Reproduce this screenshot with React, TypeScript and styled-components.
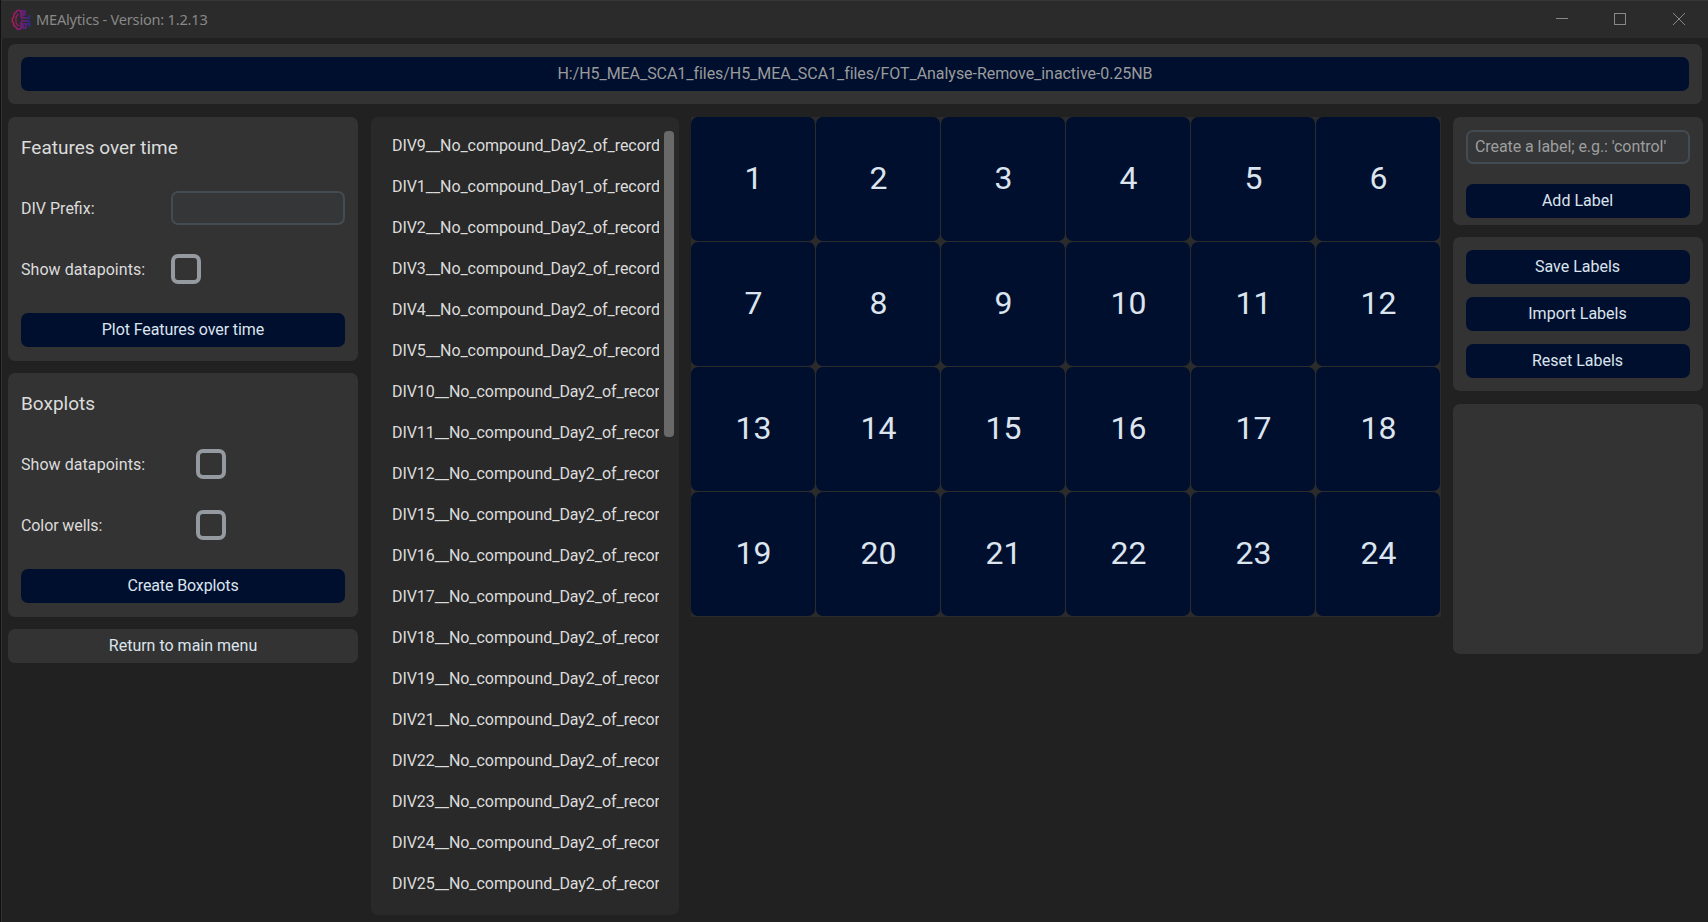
import React from "react";
import styled, { createGlobalStyle } from "styled-components";

const Global = createGlobalStyle`
  * { box-sizing: border-box; }
  body { margin: 0; background: #212121; font-family: Roboto, "Liberation Sans", sans-serif; }
  button, input { font: inherit; }
`;

const Window = styled.div`
  width: 1708px;
  height: 922px;
  overflow: hidden;
  background: #212121;
  border-left: 1px solid #111;
  box-shadow: inset 1px 0 0 #323232;
  color: #dce4ee;
  font-size: 16px;
`;

const TitleBar = styled.header`
  height: 38px;
  display: flex;
  align-items: center;
  background: #2b2b2b;
  border-top: 1px solid #363636;
  padding-left: 10px;
`;

const Title = styled.span`
  flex: 1;
  margin-left: 5px;
  font: 14.6px "Noto Sans", sans-serif;
  letter-spacing: -0.22px;
  color: #888;
  padding-bottom: 1px;
`;

const WindowControls = styled.div`
  display: flex;
  padding-right: 8px;
  svg { display: block; width: 58px; height: 37px; }
`;

const Body = styled.main`
  padding: 6px 5px 7px 7px;
`;

const PathCard = styled.div`
  width: 1694px;
  height: 60px;
  padding: 13px;
  border-radius: 7px;
  background: #333;
`;

const Button = styled.button<{ $tone?: "navy" | "gray"; $dim?: boolean; $track?: number }>`
  display: flex;
  align-items: center;
  justify-content: center;
  flex: none;
  width: 100%;
  height: 34px;
  padding: 0 0 1px;
  border: 0;
  border-radius: 7px;
  background: ${(p) => (p.$tone === "gray" ? "#333" : "#000f2e")};
  color: ${(p) => (p.$dim ? "#9a9b9c" : "#dce4ee")};
  letter-spacing: ${(p) => p.$track ?? 0}px;
`;

const Columns = styled.div`
  display: flex;
  align-items: flex-start;
  gap: 12px;
  margin-top: 13px;
`;

const LeftColumn = styled.div`
  width: 350px;
  margin-right: 1px;
  display: flex;
  flex-direction: column;
  gap: 12px;
`;

const RightColumn = styled.div`
  width: 250px;
  display: flex;
  flex-direction: column;
  ${Button} { padding-right: 1px; }
`;

const Card = styled.section<{ $height: number; $gap?: number; $after?: number }>`
  display: flex;
  flex-direction: column;
  gap: ${(p) => p.$gap ?? 0}px;
  height: ${(p) => p.$height}px;
  margin-bottom: ${(p) => p.$after ?? 0}px;
  padding: 13px;
  border-radius: 7px;
  background: #333;
`;

const Heading = styled.h2`
  flex: none;
  height: 34px;
  margin: 0;
  padding-top: 1px;
  font-size: 19px;
  font-weight: 400;
  line-height: 34px;
  color: #dcdcdc;
`;

const Field = styled.div<{ $label: number }>`
  display: grid;
  flex: none;
  grid-template-columns: ${(p) => p.$label}px 1fr;
  align-items: center;
  height: 61px;
  padding-bottom: 1px;
  color: #dcdcdc;
`;

const Label = styled.label<{ $track?: number }>`
  letter-spacing: ${(p) => p.$track ?? 0}px;
`;

const FormCard = styled(Card)`
  ${Button} { margin-top: 13px; }
  ${Heading} + ${Field} { margin-top: 14px; }
`;

const Input = styled.input`
  width: 100%;
  height: 34px;
  padding: 0 7px 2px;
  border: 2px solid #434b53;
  border-radius: 7px;
  outline: 0;
  background: #343638;
  color: #dce4ee;
  letter-spacing: -0.07px;
  flex: none;
  &::placeholder { color: #9e9e9e; opacity: 1; }
`;

const Check = styled.input.attrs({ type: "checkbox" })`
  appearance: none;
  width: 30px;
  height: 30px;
  margin: 0;
  border: 4px solid #949a9f;
  border-radius: 7px;
`;

const FileList = styled.div`
  width: 308px;
  height: 798px;
  padding: 13px 5px 0 21px;
  display: flex;
  border-radius: 7px;
  background: #292929;
`;

const Files = styled.div`
  width: 267px;
  overflow: hidden;
  padding-top: 1px;
`;

const FileName = styled.div`
  height: 41px;
  line-height: 30px;
  white-space: nowrap;
  letter-spacing: -0.07px;
  color: #dcdcdc;
`;

const ScrollThumb = styled.div`
  width: 10px;
  height: 306px;
  margin: 1px 0 0 5px;
  border-radius: 4px;
  background: #696969;
`;

const Plate = styled.div`
  display: grid;
  grid-template-columns: repeat(6, 124px);
  grid-auto-rows: 124px;
  gap: 1px;
  width: 750px;
  height: 500px;
  background: #2b2b2b;
`;

const Well = styled.button`
  padding: 0 0 2px 1px;
  border: 0;
  border-radius: 7px;
  background: #000f2e;
  color: #dce4ee;
  font-size: 32px;
`;

const shortNames = [9, 1, 2, 3, 4, 5];
const longNames = [10, 11, 12, 15, 16, 17, 18, 19, 21, 22, 23, 24, 25];
const files = [...shortNames, ...longNames].map(
  (n) => `DIV${n}__No_compound_Day${n === 1 ? 1 : 2}_of_recor${n < 10 ? "d" : ""}`
);

const Logo = () => (
  <svg width="20" height="22" viewBox="0 0 20 22" fill="none">
    <defs>
      <linearGradient id="brain" x1="0" x2="20" y1="0" y2="0" gradientUnits="userSpaceOnUse">
        <stop stopColor="#c01750" />
        <stop offset=".5" stopColor="#851a80" />
        <stop offset="1" stopColor="#28289c" />
      </linearGradient>
    </defs>
    <g stroke="url(#brain)" strokeWidth="1.5">
      <path d="M9.500 2C7 .5 5.500 1.500 5 3.500 3 4 2.500 5.500 3 7.500 1 9 .5 12.500 2.500 14 2.500 16.500 3.500 17.500 5 18 5.500 20 7.500 20.500 9.500 20" />
      <path d="M6 6.500C4.500 8 4.500 14 6 15.500M6 6.500 7.500 5M6 15.500 8 17" strokeWidth="1.2" />
      <path d="M10 1.500v7M10 13v7.500M12 3v4.500M12 14v5M10 2h4v3M14 5v1.500M10 9h9M10 12h9M13 15h6M12 19h3v-3M18.500 6v3M18.500 12v6" />
    </g>
  </svg>
);

export default function App() {
  return (
    <>
      <Global />
      <Window>
        <TitleBar>
          <Logo />
          <Title>MEAlytics - Version: 1.2.13</Title>
          <WindowControls>
            <svg viewBox="0 0 58 37" stroke="#888" fill="none"><path d="M30 17.500h12" /></svg>
            <svg viewBox="0 0 58 37" stroke="#888" fill="none"><rect x="30.500" y="12.500" width="11" height="11" /></svg>
            <svg viewBox="0 0 58 37" stroke="#888" fill="none"><path d="m31 12 12 12m0-12-12 12" /></svg>
          </WindowControls>
        </TitleBar>
        <Body>
          <PathCard>
            <Button $dim $track={-0.052}>H:/H5_MEA_SCA1_files/H5_MEA_SCA1_files/FOT_Analyse-Remove_inactive-0.25NB</Button>
          </PathCard>
          <Columns>
            <LeftColumn>
              <FormCard $height={244}>
                <Heading>Features over time</Heading>
                <Field $label={150}><Label>DIV Prefix:</Label><Input /></Field>
                <Field $label={150}><Label $track={0.06}>Show datapoints:</Label><Check /></Field>
                <Button $track={-0.09}>Plot Features over time</Button>
              </FormCard>
              <FormCard $height={244}>
                <Heading>Boxplots</Heading>
                <Field $label={175}><Label $track={0.06}>Show datapoints:</Label><Check /></Field>
                <Field $label={175}><Label $track={-0.1}>Color wells:</Label><Check /></Field>
                <Button $track={-0.12}>Create Boxplots</Button>
              </FormCard>
              <Button $tone="gray">Return to main menu</Button>
            </LeftColumn>
            <FileList>
              <Files>{files.map((f) => <FileName key={f}>{f}</FileName>)}</Files>
              <ScrollThumb />
            </FileList>
            <Plate>
              {Array.from({ length: 24 }, (_, i) => <Well key={i}>{i + 1}</Well>)}
            </Plate>
            <RightColumn>
              <Card $height={108} $gap={20} $after={12}>
                <Input placeholder="Create a label; e.g.: 'control'" />
                <Button>Add Label</Button>
              </Card>
              <Card $height={154} $gap={13} $after={13}>
                <Button>Save Labels</Button>
                <Button>Import Labels</Button>
                <Button>Reset Labels</Button>
              </Card>
              <Card $height={250} />
            </RightColumn>
          </Columns>
        </Body>
      </Window>
    </>
  );
}
